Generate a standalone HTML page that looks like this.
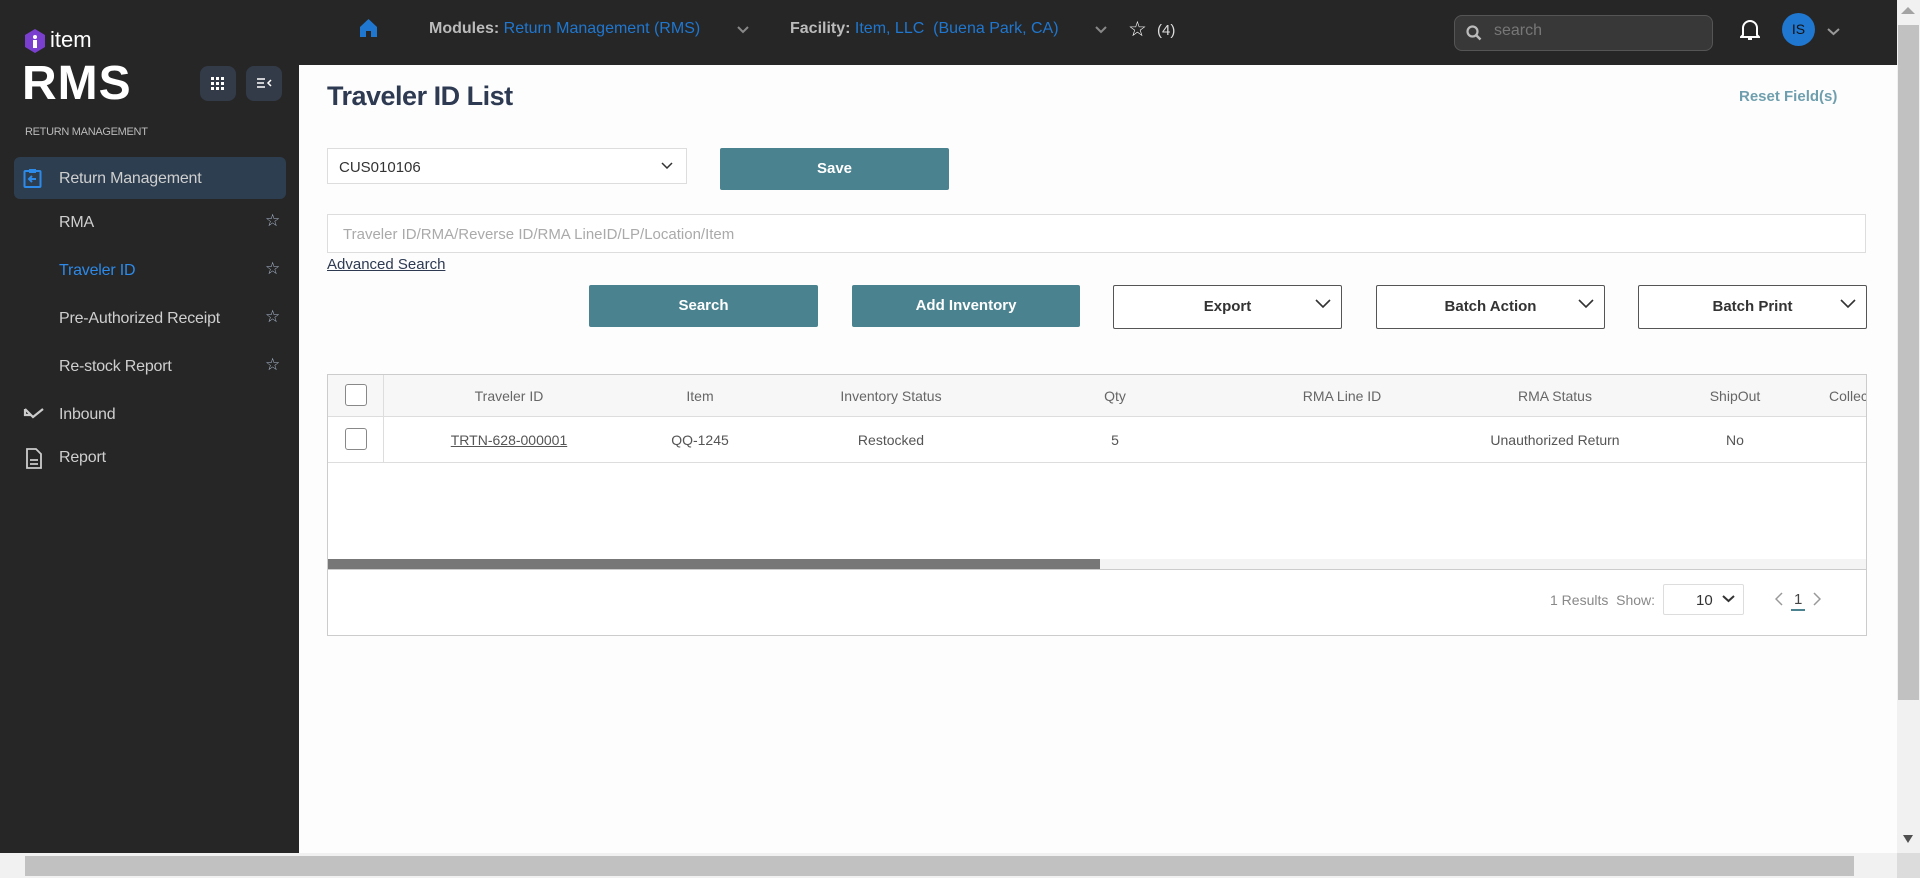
<!DOCTYPE html>
<html><head><meta charset="utf-8"><style>
*{box-sizing:border-box;margin:0;padding:0}
body{width:1920px;height:878px;overflow:hidden;background:#fdfdfd;font-family:"Liberation Sans",sans-serif;position:relative}
.abs{position:absolute}
#side{left:0;top:0;width:299px;height:853px;background:#262626}
#top{left:299px;top:0;width:1598px;height:65px;background:#262626}
.nav{position:absolute;left:59px;font-size:16px;color:#cfcfcf;letter-spacing:-0.2px}
.star{position:absolute;left:265px;color:#aab8cc;font-size:17px}
.btn{position:absolute;background:#4a828f;color:#fff;font-weight:bold;font-size:15px;text-align:center;border-radius:2px}
.dd{position:absolute;border:1px solid #555;border-radius:2px;background:#fff;font-size:15px;font-weight:bold;color:#333;text-align:center}
.dd svg{position:absolute;right:10px;top:13px}
.th{position:absolute;top:388px;font-size:14px;color:#666;transform:translateX(-50%);white-space:nowrap}
.td{position:absolute;top:432px;font-size:14px;color:#555;transform:translateX(-50%);white-space:nowrap}
.cb{position:absolute;left:345px;width:22px;height:22px;border:1px solid #888;border-radius:3px;background:#fff}
</style></head><body>
<div id="side" class="abs">
  <svg class="abs" style="left:25px;top:29px" width="20" height="24" viewBox="0 0 20 24"><polygon points="10,0 20,6 20,18 10,24 0,18 0,6" fill="#7b3fd0"/><circle cx="10" cy="8" r="2" fill="#fff"/><rect x="8" y="11" width="4" height="8" fill="#fff"/></svg>
  <div class="abs" style="left:50px;top:27px;color:#fff;font-size:22px">item</div>
  <div class="abs" style="left:22px;top:56px;color:#fff;font-size:48px;font-weight:bold;letter-spacing:1px">RMS</div>
  <div class="abs" style="left:200px;top:66px;width:36px;height:35px;background:#333b48;border-radius:8px"></div>
  <svg class="abs" style="left:211px;top:77px" width="13" height="13"><g fill="#fff"><rect x="0" y="0" width="3" height="3"/><rect x="5" y="0" width="3" height="3"/><rect x="10" y="0" width="3" height="3"/><rect x="0" y="5" width="3" height="3"/><rect x="5" y="5" width="3" height="3"/><rect x="10" y="5" width="3" height="3"/><rect x="0" y="10" width="3" height="3"/><rect x="5" y="10" width="3" height="3"/><rect x="10" y="10" width="3" height="3"/></g></svg>
  <div class="abs" style="left:246px;top:66px;width:36px;height:35px;background:#333b48;border-radius:8px"></div>
  <svg class="abs" style="left:256px;top:77px" width="16" height="12"><path d="M1 2h8M1 6h7M1 10h8M15 3l-3 3 3 3" stroke="#fff" stroke-width="1.5" fill="none"/></svg>
  <div class="abs" style="left:25px;top:126px;color:#bbb;font-size:11px;letter-spacing:-0.3px">RETURN MANAGEMENT</div>
  <div class="abs" style="left:14px;top:157px;width:272px;height:42px;background:#2d3e50;border-radius:6px"></div>
  <svg class="abs" style="left:23px;top:168px" width="19" height="20"><rect x="1.5" y="3" width="16" height="16" rx="1" stroke="#2d8ae8" stroke-width="2" fill="none"/><rect x="6" y="1" width="7" height="4" fill="#2d8ae8"/><path d="M13 11H6M9 8l-3 3 3 3" stroke="#2d8ae8" stroke-width="2" fill="none"/></svg>
  <div class="nav" style="top:170px">Return Management</div>
  <div class="nav" style="top:214px">RMA</div><div class="star" style="top:211px">☆</div>
  <div class="nav" style="top:262px;color:#2d8ae8">Traveler ID</div><div class="star" style="top:259px">☆</div>
  <div class="nav" style="top:310px">Pre-Authorized Receipt</div><div class="star" style="top:307px">☆</div>
  <div class="nav" style="top:358px">Re-stock Report</div><div class="star" style="top:355px">☆</div>
  <svg class="abs" style="left:23px;top:407px" width="22" height="16"><path d="M2 2v6h6M2 2l8 8 10-8" stroke="#ccc" stroke-width="2.2" fill="none"/></svg>
  <div class="nav" style="top:406px">Inbound</div>
  <svg class="abs" style="left:26px;top:448px" width="16" height="21"><path d="M1 1h9l5 5v14H1z" stroke="#ccc" stroke-width="1.8" fill="none"/><path d="M4 12h8M4 16h8" stroke="#ccc" stroke-width="1.8"/></svg>
  <div class="nav" style="top:449px">Report</div>
</div>
<div id="top" class="abs">
  <svg class="abs" style="left:61px;top:19px" width="17" height="18"><path d="M8.5 0L17 8v10h-6v-6H6v6H0V8z" fill="#1f77d0"/></svg>
  <div class="abs" style="left:130px;top:20px;font-size:16px;color:#bbb;font-weight:bold;white-space:nowrap">Modules: <span style="color:#1f77d0;font-weight:normal">Return Management (RMS)</span></div>
  <svg class="abs" style="left:438px;top:26px" width="12" height="8"><path d="M1 1l5 5 5-5" stroke="#888" stroke-width="2" fill="none"/></svg>
  <div class="abs" style="left:491px;top:20px;font-size:16px;color:#bbb;font-weight:bold;white-space:nowrap">Facility: <span style="color:#1f77d0;font-weight:normal">Item, LLC&nbsp; (Buena Park, CA)</span></div>
  <svg class="abs" style="left:796px;top:26px" width="12" height="8"><path d="M1 1l5 5 5-5" stroke="#888" stroke-width="2" fill="none"/></svg>
  <div class="abs" style="left:829px;top:17px;font-size:21px;color:#fff">☆</div>
  <div class="abs" style="left:858px;top:22px;font-size:15px;color:#ddd">(4)</div>
  <div class="abs" style="left:1155px;top:15px;width:259px;height:36px;background:#383838;border:1px solid #555;border-radius:8px"></div>
  <svg class="abs" style="left:1167px;top:25px" width="16" height="16"><circle cx="6.5" cy="6.5" r="5" stroke="#bbb" stroke-width="2.2" fill="none"/><path d="M10 10l4.5 4.5" stroke="#bbb" stroke-width="2.5"/></svg>
  <div class="abs" style="left:1195px;top:22px;font-size:16px;color:#777">search</div>
  <svg class="abs" style="left:1441px;top:19px" width="20" height="22"><path d="M3 16V9a7 7 0 0 1 14 0v7l2 2H1z" stroke="#fff" stroke-width="2" fill="none"/><path d="M8 20h4" stroke="#fff" stroke-width="2"/></svg>
  <div class="abs" style="left:1483px;top:13px;width:33px;height:33px;border-radius:50%;background:#1f77d0;color:#111;font-size:14px;text-align:center;line-height:33px">IS</div>
  <svg class="abs" style="left:1528px;top:28px" width="13" height="8"><path d="M1 1l5.5 5 5.5-5" stroke="#999" stroke-width="2" fill="none"/></svg>
</div>
<div class="abs" style="left:327px;top:81px;font-size:27px;color:#2d3a52;font-weight:bold;letter-spacing:-0.5px">Traveler ID List</div>
<div class="abs" style="left:1739px;top:88px;font-size:15px;color:#6f9fae;font-weight:bold">Reset Field(s)</div>
<div class="abs" style="left:327px;top:148px;width:360px;height:36px;border:1px solid #ddd;background:#fff;font-size:15px;color:#333;padding:10px 11px">CUS010106</div>
<svg class="abs" style="left:661px;top:162px" width="12" height="7"><path d="M1 1l5 5 5-5" stroke="#333" stroke-width="1.5" fill="none"/></svg>
<div class="btn" style="left:720px;top:148px;width:229px;height:42px;line-height:42px">Save</div>
<div class="abs" style="left:327px;top:214px;width:1539px;height:39px;border:1px solid #ddd;background:#fff;font-size:15px;color:#aaa;padding:11px 15px">Traveler ID/RMA/Reverse ID/RMA LineID/LP/Location/Item</div>
<div class="abs" style="left:327px;top:256px;font-size:15px;color:#2d3a52;text-decoration:underline">Advanced Search</div>
<div class="btn" style="left:589px;top:285px;width:229px;height:42px;line-height:42px">Search</div>
<div class="btn" style="left:852px;top:285px;width:228px;height:42px;line-height:42px">Add Inventory</div>
<div class="dd" style="left:1113px;top:285px;width:229px;height:44px;line-height:42px">Export<svg width="16" height="10"><path d="M1 1l7 7 7-7" stroke="#333" stroke-width="1.6" fill="none"/></svg></div>
<div class="dd" style="left:1376px;top:285px;width:229px;height:44px;line-height:42px">Batch Action<svg width="16" height="10"><path d="M1 1l7 7 7-7" stroke="#333" stroke-width="1.6" fill="none"/></svg></div>
<div class="dd" style="left:1638px;top:285px;width:229px;height:44px;line-height:42px">Batch Print<svg width="16" height="10"><path d="M1 1l7 7 7-7" stroke="#333" stroke-width="1.6" fill="none"/></svg></div>
<div class="abs" style="left:327px;top:374px;width:1540px;height:262px;border:1px solid #ccc;background:#fff"></div>
<div class="abs" style="left:328px;top:375px;width:1538px;height:42px;background:#f7f7f7;border-bottom:1px solid #ddd"></div>
<div class="abs" style="left:328px;top:417px;width:1538px;height:46px;border-bottom:1px solid #ddd"></div>
<div class="abs" style="left:383px;top:375px;width:1px;height:88px;background:#ddd"></div>
<div class="cb" style="top:384px"></div><div class="cb" style="top:428px"></div>
<div class="th" style="left:509px">Traveler ID</div><div class="th" style="left:700px">Item</div><div class="th" style="left:891px">Inventory Status</div><div class="th" style="left:1115px">Qty</div><div class="th" style="left:1342px">RMA Line ID</div><div class="th" style="left:1555px">RMA Status</div><div class="th" style="left:1735px">ShipOut</div>
<div class="abs" style="left:1829px;top:388px;font-size:14px;color:#666;width:37px;overflow:hidden;white-space:nowrap">Collected</div>
<div class="td" style="left:509px;text-decoration:underline">TRTN-628-000001</div><div class="td" style="left:700px">QQ-1245</div><div class="td" style="left:891px">Restocked</div><div class="td" style="left:1115px">5</div><div class="td" style="left:1555px">Unauthorized Return</div><div class="td" style="left:1735px">No</div>
<div class="abs" style="left:328px;top:559px;width:1538px;height:11px;background:#f4f4f4;border-bottom:1px solid #ccc"></div>
<div class="abs" style="left:328px;top:559px;width:772px;height:10px;background:#777"></div>
<div class="abs" style="left:1550px;top:592px;font-size:14px;color:#888">1 Results&nbsp; Show:</div>
<div class="abs" style="left:1663px;top:584px;width:81px;height:31px;border:1px solid #ddd;border-radius:2px;font-size:15px;color:#333;padding:7px 0 0 32px">10</div>
<svg class="abs" style="left:1722px;top:595px" width="13" height="8"><path d="M1 1l5.5 5 5.5-5" stroke="#333" stroke-width="2" fill="none"/></svg>
<svg class="abs" style="left:1775px;top:592px" width="8" height="14"><path d="M7 1L1 7l6 6" stroke="#999" stroke-width="1.5" fill="none"/></svg>
<div class="abs" style="left:1794px;top:591px;font-size:15px;color:#444">1</div>
<div class="abs" style="left:1791px;top:609px;width:14px;height:2px;background:#4a828f"></div>
<svg class="abs" style="left:1813px;top:592px" width="8" height="14"><path d="M1 1l6 6-6 6" stroke="#999" stroke-width="1.5" fill="none"/></svg>
<div class="abs" style="left:1897px;top:0;width:23px;height:853px;background:#f1f1f1"></div>
<div class="abs" style="left:1898px;top:25px;width:21px;height:675px;background:#c1c1c1"></div>
<div class="abs" style="left:1901px;top:7px;width:0;height:0;border:7px solid transparent;border-bottom:7px solid #a3a3a3;border-top:0"></div>
<div class="abs" style="left:1903px;top:835px;width:0;height:0;border:5px solid transparent;border-top:8px solid #505050;border-bottom:0"></div>
<div class="abs" style="left:0;top:853px;width:1920px;height:25px;background:#f1f1f1"></div>
<div class="abs" style="left:25px;top:856px;width:1829px;height:20px;background:#c1c1c1"></div>
<div class="abs" style="left:1897px;top:853px;width:23px;height:25px;background:#dcdcdc"></div>
</body></html>
